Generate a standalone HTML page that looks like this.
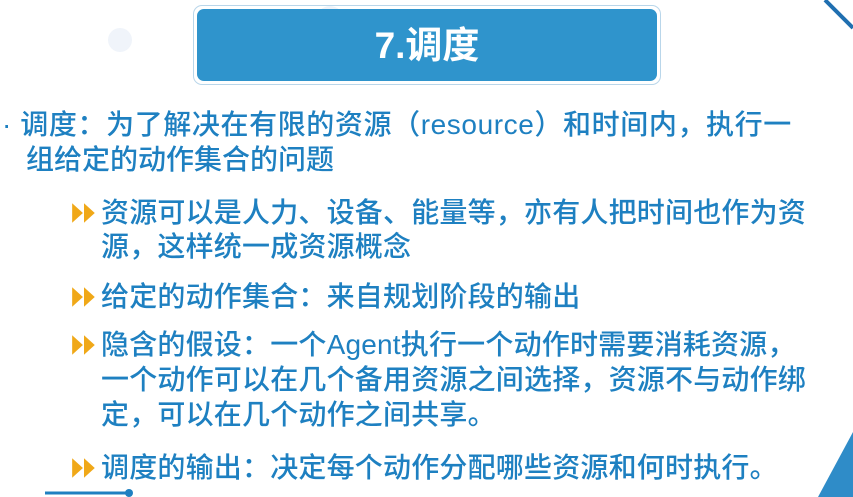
<!DOCTYPE html>
<html><head><meta charset="utf-8"><style>
body{margin:0;width:853px;height:497px;overflow:hidden;background:#fff;position:relative;font-family:"Liberation Sans","Noto Sans CJK SC",sans-serif;color:#1e80c1}
.t{position:absolute;left:193px;top:5px;width:468px;height:80px;border:1px solid #b9d6ea;border-radius:9px;box-sizing:border-box}
.ti{position:absolute;left:3px;top:3px;right:3px;bottom:3px;background:#2f94cc;border-radius:7px;color:#fff;font-weight:bold;font-size:37px;text-align:center;line-height:74px}
.l{position:absolute;white-space:nowrap;font-size:28px;line-height:35px;font-weight:500}
.s{font-size:28px;letter-spacing:0.2px}
.a{position:absolute;width:28px;height:24px}
</style></head><body>
<svg style="position:absolute;left:0;top:0" width="853" height="497">
<line x1="825" y1="0" x2="853" y2="28" stroke="#1f6fb0" stroke-width="4"/>
<polygon points="853,432 853,497 818,497" fill="#2f8cc8"/>
<line x1="45" y1="493" x2="128" y2="493" stroke="#1f80c1" stroke-width="3"/>
<circle cx="129" cy="493" r="4" fill="#1f80c1"/>
<circle cx="330" cy="20" r="14" fill="#eef3fa"/>
<circle cx="120" cy="40" r="12" fill="#f0f4fa"/>
</svg>
<div class="t"><div class="ti">7.调度</div></div>
<div class="l" style="left:2px;top:107px;letter-spacing:0.6px">· 调度：为了解决在有限的资源（resource）和时间内，执行一</div>
<div class="l" style="left:26px;top:142px">组给定的动作集合的问题</div>
<svg class="a" style="left:70px;top:201px" viewBox="0 0 26 22"><polygon points="2,2 12,11 2,20" fill="#f0a818"/><polygon points="13,2 23,11 13,20" fill="#f0a818"/></svg>
<div class="l s" style="left:101px;top:195px">资源可以是人力、设备、能量等，亦有人把时间也作为资</div>
<div class="l s" style="left:101px;top:229px">源，这样统一成资源概念</div>
<svg class="a" style="left:70px;top:285px" viewBox="0 0 26 22"><polygon points="2,2 12,11 2,20" fill="#f0a818"/><polygon points="13,2 23,11 13,20" fill="#f0a818"/></svg>
<div class="l s" style="left:101px;top:279px">给定的动作集合：来自规划阶段的输出</div>
<svg class="a" style="left:70px;top:333px" viewBox="0 0 26 22"><polygon points="2,2 12,11 2,20" fill="#f0a818"/><polygon points="13,2 23,11 13,20" fill="#f0a818"/></svg>
<div class="l s" style="left:101px;top:327px">隐含的假设：一个Agent执行一个动作时需要消耗资源，</div>
<div class="l s" style="left:101px;top:362px">一个动作可以在几个备用资源之间选择，资源不与动作绑</div>
<div class="l s" style="left:101px;top:397px">定，可以在几个动作之间共享。</div>
<svg class="a" style="left:70px;top:456px" viewBox="0 0 26 22"><polygon points="2,2 12,11 2,20" fill="#f0a818"/><polygon points="13,2 23,11 13,20" fill="#f0a818"/></svg>
<div class="l s" style="left:101px;top:450px">调度的输出：决定每个动作分配哪些资源和何时执行。</div>
</body></html>
